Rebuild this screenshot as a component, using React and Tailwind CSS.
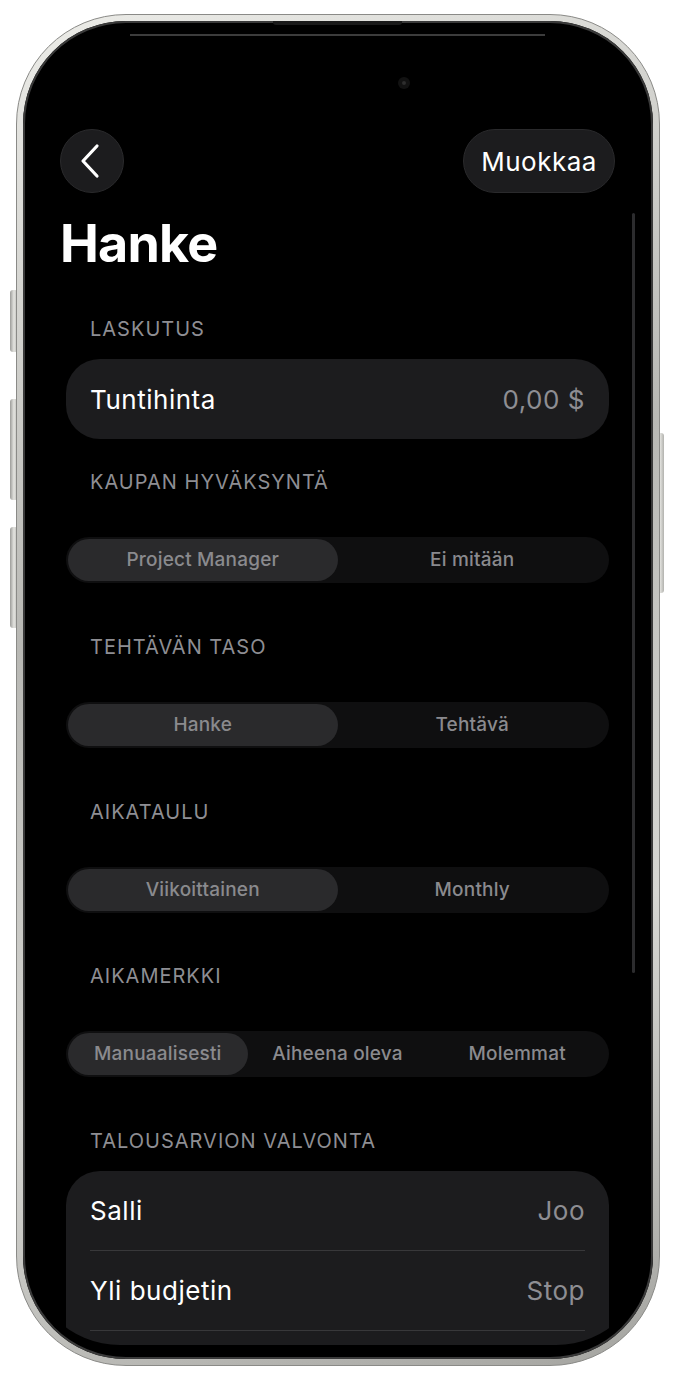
import React from 'react';

const font = { fontFamily: 'Inter, "Noto Sans", sans-serif' };

const SectionHeader = ({ children, className = '' }) => (
  <div className={`px-[24px] h-[24px] text-[20px] leading-[24px] tracking-[0.05em] text-[#8e8e93] ${className}`}>
    {children}
  </div>
);

const Segmented = ({ options, selected = 0, className = '' }) => (
  <div className={`flex h-[46px] rounded-full bg-[#0f0f10] p-[2px] ${className}`}>
    {options.map((opt, i) => (
      <div
        key={opt}
        className={`flex-1 flex items-center justify-center rounded-full text-[19px] tracking-[0.01em] font-medium text-[#8a8a8e] ${
          i === selected ? 'bg-[#2a2a2c]' : ''
        }`}
      >
        {opt}
      </div>
    ))}
  </div>
);

const Row = ({ label, value, divider }) => (
  <div className="px-[24px]">
    <div className={`flex items-center justify-between h-[80px] text-[26px] tracking-[0.02em] ${divider ? 'border-b border-[#38383a]' : ''}`}>
      <span className="text-white">{label}</span>
      <span className="text-[#8e8e93]">{value}</span>
    </div>
  </div>
);

const Screen = () => (
  <div className="relative h-full rounded-[92px] overflow-hidden bg-black pt-[103px]">
    {/* nav bar */}
    <div className="flex items-center justify-between pl-[32px] pr-[33px]">
      <button className="w-[64px] h-[64px] rounded-full bg-[#1c1c1e] border border-[#2a2a2c] flex items-center justify-center pr-[4px]">
        <svg width="22" height="36" viewBox="0 0 22 36" fill="none">
          <polyline points="18,3 4,18 18,33" stroke="white" strokeWidth="3.2" strokeLinecap="round" strokeLinejoin="round" />
        </svg>
      </button>
      <button className="h-[64px] px-[17px] rounded-full bg-[#1c1c1e] border border-[#2a2a2c] text-[26px] tracking-[0.02em] text-white">
        Muokkaa
      </button>
    </div>

    <h1 className="mt-[25px] pl-[32px] h-[52px] text-[52px] leading-none font-bold tracking-[-0.015em] text-white">
      Hanke
    </h1>

    <div className="pl-[38px] pr-[39px]">
      <SectionHeader className="mt-[47px]">LASKUTUS</SectionHeader>
      <div className="mt-[18px] rounded-[34px] bg-[#1c1c1e]">
        <Row label="Tuntihinta" value="0,00 $" />
      </div>

      <SectionHeader className="mt-[31px]">KAUPAN HYVÄKSYNTÄ</SectionHeader>
      <Segmented className="mt-[43px]" options={['Project Manager', 'Ei mitään']} />

      <SectionHeader className="mt-[52px]">TEHTÄVÄN TASO</SectionHeader>
      <Segmented className="mt-[43px]" options={['Hanke', 'Tehtävä']} />

      <SectionHeader className="mt-[52px]">AIKATAULU</SectionHeader>
      <Segmented className="mt-[43px]" options={['Viikoittainen', 'Monthly']} />

      <SectionHeader className="mt-[51px]">AIKAMERKKI</SectionHeader>
      <Segmented className="mt-[43px]" options={['Manuaalisesti', 'Aiheena oleva', 'Molemmat']} />

      <SectionHeader className="mt-[52px]">TALOUSARVION VALVONTA</SectionHeader>
      <div className="mt-[18px] pb-[60px] rounded-t-[34px] bg-[#1c1c1e]">
        <Row label="Salli" value="Joo" divider />
        <Row label="Yli budjetin" value="Stop" divider />
      </div>
    </div>

    {/* scroll indicator */}
    <div className="absolute right-[13px] top-[187px] w-[3px] h-[760px] rounded-full bg-[#2c2c2e]" />
  </div>
);

const sideButton = 'absolute -z-10 w-[8px] rounded-[3px] bg-[linear-gradient(90deg,#9c9c99,#e4e4e0_50%,#b2b2ae)]';

export default function App() {
  return (
    <div className="w-[675px] h-[1380px] bg-white pt-[14px] pl-[16px]" style={font}>
      <div className="relative isolate w-[644px] h-[1352px]">
        {/* side buttons */}
        <div className={`${sideButton} left-[-6px] top-[276px] h-[62px]`} />
        <div className={`${sideButton} left-[-6px] top-[385px] h-[101px]`} />
        <div className={`${sideButton} left-[-6px] top-[513px] h-[101px]`} />
        <div className={`${sideButton} right-[-4px] top-[419px] h-[160px]`} />

        {/* frame */}
        <div className="h-full rounded-[110px] border border-[#8a8a87] bg-[linear-gradient(160deg,#ececE8,#b8b8b4_40%,#d6d6d2_70%,#a4a4a0)] p-[6px]">
          <div className="h-full rounded-[103px] bg-black shadow-[inset_0_0_0_2px_#3a3a3a] px-[5px] pt-[5px] pb-[14px]">
            <Screen />
          </div>
        </div>

        {/* top speaker slit and glass edge */}
        <div className="absolute left-[257px] top-[7px] w-[129px] h-[4px] rounded-b-[3px] bg-[#1a1a1a]" />
        <div className="absolute left-[114px] top-[20px] w-[415px] h-[2px] bg-[#3c3c3c]" />
        {/* front camera */}
        <div className="absolute left-[382px] top-[63px] w-[12px] h-[12px] rounded-full bg-[#121212] flex items-center justify-center">
          <div className="w-[4px] h-[4px] rounded-full bg-[#2e2e2e]" />
        </div>
      </div>
    </div>
  );
}
